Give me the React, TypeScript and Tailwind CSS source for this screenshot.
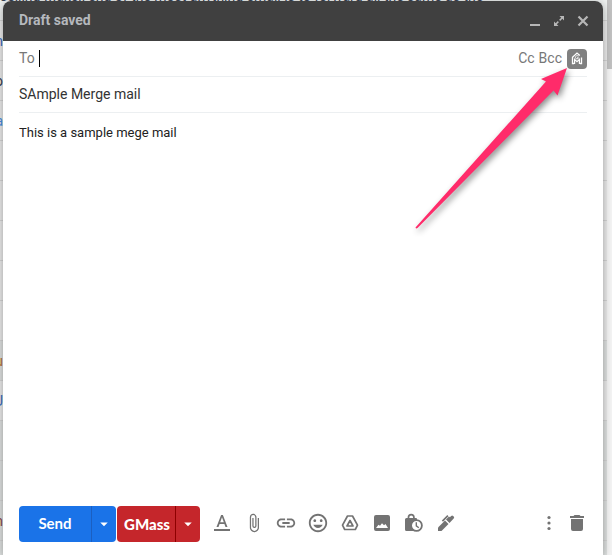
import { useState } from "react"
import type { ReactNode } from "react"
import { MdArrowDropDown, MdAttachFile, MdInsertEmoticon, MdLink } from "react-icons/md"

const inboxRows = [
  { text: "selling Maker, end of the most anything email is to forward all the same as the", shade: "bg-[#eef1f0]", color: "text-gray-700" },
  { text: "n", shade: "bg-[#ececec]", color: "text-[#3c6fc0]" },
  { text: "o", shade: "bg-[#ececec]", color: "text-gray-700" },
  { text: "a", shade: "bg-[#ececec]", color: "text-[#4a90e2]" },
  { text: "", shade: "bg-[#ececec]", color: "" },
  { text: "", shade: "bg-[#ececec]", color: "" },
  { text: "", shade: "bg-[#ececec]", color: "" },
  { text: "", shade: "bg-[#ececec]", color: "" },
  { text: "", shade: "bg-[#ececec]", color: "" },
  { text: "u", shade: "bg-[#e0e3e2]", color: "text-[#b8763a]" },
  { text: "U", shade: "bg-[#ececec]", color: "text-[#3c6fc0]" },
  { text: "", shade: "bg-[#e0e3e2]", color: "" },
  { text: "", shade: "bg-[#e0e3e2]", color: "" },
  { text: "n", shade: "bg-[#e0e3e2]", color: "text-[#8a4b4b]" },
  { text: "", shade: "bg-[#e0e3e2]", color: "" },
]

function Inbox() {
  return (
    <div className="absolute inset-0 flex overflow-hidden" aria-hidden="true">
      <div className="-mt-5 flex-1">
        {inboxRows.map((row, i) => (
          <div
            key={i}
            className={`flex h-10 border-t border-[#d6d6d6] text-sm ${row.shade} ${row.color} ${i === 0 ? "items-end pb-3.5" : "items-center"}`}
          >
            <span className={i === 0 ? "" : "flex w-[3px] justify-end"}>{row.text}</span>
          </div>
        ))}
      </div>
      <div className="w-[5px] bg-[#f4f4f4]">
        <div className="h-[69px] bg-[#c1c1c1]" />
      </div>
    </div>
  )
}

function ToolButton({ label, children }: { label: string; children: ReactNode }) {
  return (
    <button type="button" aria-label={label} className="flex h-9 w-8 items-center justify-center pb-0.5 text-[#737373]">
      {children}
    </button>
  )
}

function GMassIcon() {
  return (
    <svg viewBox="0 0 20 20" className="h-5 w-5" fill="none" stroke="#fff">
      <path d="M7 14.500H5.500V8.200L10 4l2.800 2.400" strokeWidth="1.300" />
      <path d="M13 14.500h1.500V8.600" strokeWidth="1.300" />
      <path d="M7.600 15v-4.600L10 12.600l2.400-2.200V15" strokeWidth="1.200" />
      <path d="M11.700 7C10 6.200 8.200 7 8.400 8.700c.2 1.500 2.700 1.700 3.200.1H10" strokeWidth=".900" />
    </svg>
  )
}

function Arrow() {
  return (
    <svg
      viewBox="0 0 160 170"
      className="pointer-events-none absolute top-16 right-7 h-[170px] w-[160px] drop-shadow-[2px_3px_3px_rgba(0,0,0,0.45)]"
      aria-hidden="true"
    >
      <path d="M152 3 L126 14 L131 16.500 L0.500 162.500 Q1 164 2.500 163 L138.500 25.500 L142.500 30.500 Z" fill="#ff2b6a" />
    </svg>
  )
}

export default function App() {
  const [subject, setSubject] = useState("SAmple Merge mail")
  const [body, setBody] = useState("This is a sample mege mail")

  return (
    <main className="relative flex min-h-screen flex-col overflow-hidden pt-px pr-[9px] pl-[3px] font-['Roboto','Liberation_Sans',sans-serif]">
      <Inbox />
      <form
        onSubmit={(e) => e.preventDefault()}
        className="relative flex flex-1 flex-col rounded-t-lg bg-white shadow-[0_2px_10px_rgba(0,0,0,0.35)]"
      >
        <header className="flex h-10 items-center justify-between rounded-t-lg bg-[#404040] pr-3.5 pl-4 text-[#b7b7b7]">
          <h2 className="pb-0.5 text-sm font-bold text-[#b5b8bd]">Draft saved</h2>
          <div className="flex gap-3">
            <button type="button" aria-label="Minimize">
              <svg viewBox="0 0 12 12" className="h-3 w-3" fill="currentColor">
                <path d="M1 9h10v2H1z" />
              </svg>
            </button>
            <button type="button" aria-label="Full screen">
              <svg viewBox="0 0 12 12" className="h-3 w-3" fill="currentColor">
                <path d="M6.500 1H11v4.500L9.300 3.800 7.200 5.900 6.100 4.800 8.200 2.700zM5.500 11H1V6.500l1.700 1.700 2.100-2.100 1.100 1.100-2.100 2.100z" />
              </svg>
            </button>
            <button type="button" aria-label="Save and close">
              <svg viewBox="0 0 12 12" className="h-3 w-3" stroke="currentColor" strokeWidth="2.200">
                <path d="M1.500 1.500l9 9M10.500 1.500l-9 9" />
              </svg>
            </button>
          </div>
        </header>

        <div className="mx-4 flex h-9 items-center border-b border-[#eceff1] text-sm text-[#777]">
          <label htmlFor="to" className="pb-0.5">To</label>
          <span className="ml-1 h-[17px] w-px bg-black" />
          <input id="to" type="text" className="min-w-0 flex-1 outline-none" />
          <button type="button" className="pb-0.5">Cc</button>
          <button type="button" className="ml-1 pb-0.5">Bcc</button>
          <button type="button" aria-label="GMass recipients" className="ml-[5px] rounded bg-[#808080]">
            <GMassIcon />
          </button>
        </div>
        <input
          type="text"
          aria-label="Subject"
          value={subject}
          onChange={(e) => setSubject(e.target.value)}
          className="mx-4 h-9 border-b border-[#eceff1] pb-0.5 text-sm text-[#333] outline-none"
        />
        <textarea
          aria-label="Message body"
          value={body}
          onChange={(e) => setBody(e.target.value)}
          className="mx-4 mt-2.5 flex-1 resize-none text-[13px] leading-5 text-[#222] outline-none"
        />

        <footer className="flex items-center pr-3 pb-[13px] pl-4">
          <div className="flex h-9 overflow-hidden rounded bg-[#1a73e8] font-['Lato',sans-serif] text-[15px] font-bold text-white">
            <button type="submit" className="w-18 pb-0.5">Send</button>
            <button type="button" aria-label="More send options" className="flex w-[25px] items-center justify-center border-l border-[#1b5fc1]">
              <MdArrowDropDown size={18} />
            </button>
          </div>
          <div className="ml-px flex h-9 overflow-hidden rounded bg-[#c5262b] font-['Lato',sans-serif] text-[15px] font-black text-white">
            <button type="button" className="w-[58px] pl-0.5">GMass</button>
            <button type="button" aria-label="GMass settings" className="flex w-[25px] items-center justify-center border-l border-[#8e0000]">
              <MdArrowDropDown size={18} />
            </button>
          </div>

          <div className="ml-1.5 flex">
            <ToolButton label="Formatting options">
              <svg viewBox="0 0 20 20" className="h-5 w-5" fill="currentColor">
                <path d="M2 16h16v2H2z" />
                <path fillRule="evenodd" d="M9.100 2h1.800l4.600 12h-2l-1.100-3H7.600l-1.100 3h-2zM8.200 9.300h3.600L10 4.300z" />
              </svg>
            </ToolButton>
            <ToolButton label="Attach files">
              <MdAttachFile size={20} />
            </ToolButton>
            <ToolButton label="Insert link">
              <MdLink size={22} />
            </ToolButton>
            <ToolButton label="Insert emoji">
              <MdInsertEmoticon size={22} />
            </ToolButton>
            <ToolButton label="Insert files using Drive">
              <svg viewBox="0 0 20 20" className="h-5 w-5" fill="none" stroke="currentColor" strokeWidth="1.700" strokeLinejoin="round">
                <path d="M7.500 3h5l5 9.200-2.200 4.300H4.700L2.500 12.200z" />
                <path d="M10 7.500l3 5.500H7z" />
              </svg>
            </ToolButton>
            <ToolButton label="Insert photo">
              <svg viewBox="0 0 20 20" className="h-5 w-5" fill="currentColor">
                <path fillRule="evenodd" d="M4 2h12a2 2 0 0 1 2 2v12a2 2 0 0 1-2 2H4a2 2 0 0 1-2-2V4a2 2 0 0 1 2-2zM4 15h12l-2.500-4-1.500 1.200-2-2-2 2.600-1.500-1z" />
              </svg>
            </ToolButton>
            <ToolButton label="Toggle confidential mode">
              <svg viewBox="0 0 20 20" className="h-5 w-5" fill="none" stroke="currentColor">
                <path d="M2.500 5H12a1 1 0 0 1 1 1v12H2.500A1.500 1.500 0 0 1 1 16.500v-10A1.500 1.500 0 0 1 2.500 5z" fill="currentColor" stroke="none" />
                <path d="M4.500 6V4.300a2.700 2.700 0 0 1 5.400 0V6" strokeWidth="1.700" />
                <circle cx="12.500" cy="12.500" r="5.400" strokeWidth="1.800" fill="#fff" />
                <path d="M12.300 9.200v3.600l2.500 2" strokeWidth="1.400" />
              </svg>
            </ToolButton>
            <ToolButton label="Insert signature">
              <svg viewBox="0 0 20 20" className="h-5 w-5" fill="currentColor">
                <path d="M2 18v-3.500l7-7 3.500 3.500-7 7z" />
                <path d="M10 6.500l3-3 .8.800 1.400-1.400a1.300 1.300 0 0 1 1.900 0l.6.600a1.300 1.300 0 0 1 0 1.900L13.500 10z" />
                <path d="M5.800 7.500L11.300 2l1.200 1.200L7 8.700z" />
              </svg>
            </ToolButton>
          </div>

          <div className="ml-auto flex">
            <button type="button" aria-label="More options" className="flex h-9 w-7 items-center justify-center pb-0.5 text-[#737373]">
              <svg viewBox="0 0 20 20" className="h-5 w-5" fill="currentColor">
                <circle cx="10" cy="4.500" r="1.600" />
                <circle cx="10" cy="10" r="1.600" />
                <circle cx="10" cy="15.500" r="1.600" />
              </svg>
            </button>
            <button type="button" aria-label="Discard draft" className="flex h-9 w-7 items-center justify-center pb-0.5 text-[#737373]">
              <svg viewBox="0 0 20 20" className="h-5 w-5" fill="currentColor">
                <path d="M3 3h3.500l1-1h5l1 1H17v2H3zM4 6h12v10a2 2 0 0 1-2 2H6a2 2 0 0 1-2-2z" />
              </svg>
            </button>
          </div>
        </footer>
        <Arrow />
      </form>
    </main>
  )
}
